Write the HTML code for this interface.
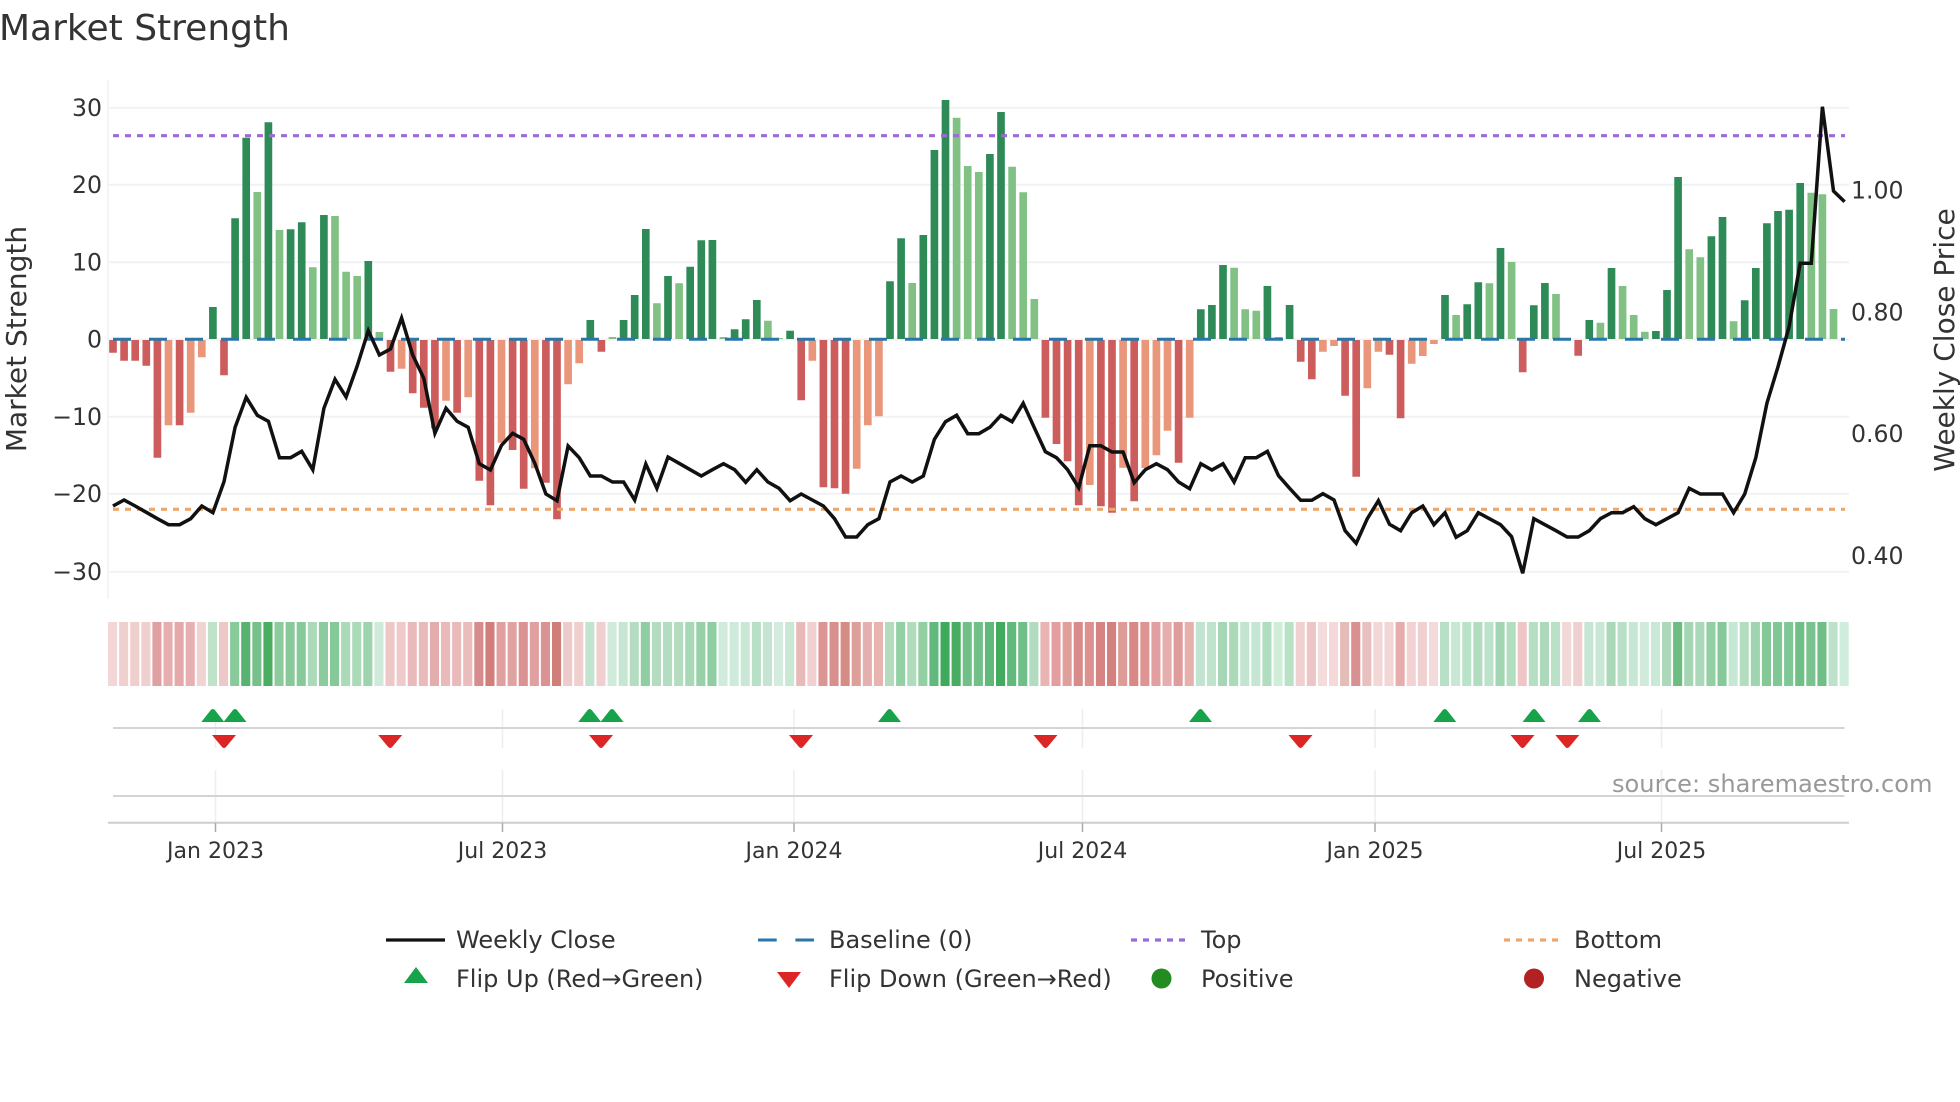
<!DOCTYPE html>
<html lang="en">
<head>
<meta charset="utf-8">
<title>Market Strength</title>
<style>
html,body{margin:0;padding:0;background:#fff}
svg{display:block}
text{font-family:"DejaVu Sans","Liberation Sans",sans-serif;fill:#333}
.t{font-size:23.6px;text-anchor:end}
.r{font-size:23.6px}
.d{font-size:22px;text-anchor:middle}
.l{font-size:24px}
.h rect{width:.82px;height:64px}
</style>
</head>
<body>
<svg width="1960" height="1102" viewBox="0 0 1960 1102" xmlns="http://www.w3.org/2000/svg">
<defs>
<path id="u" d="M-11.5 722H11.5L2 710Q0 708-2 710Z" fill="#16a34a"/>
<path id="n" d="M-12 735H12L2 747Q0 749-2 747Z" fill="#dc2626"/>
</defs>
<rect width="1960" height="1102" fill="#fff"/>
<text x="-1" y="40" style="font-size:36px">Market Strength</text>

<!-- grid -->
<path d="M108 80V599" stroke="#f1f2f5" stroke-width="1.5" fill="none"/>
<path d="M108 107.7H1849M108 184.7H1849M108 262.3H1849M108 339.5H1849M108 416.7H1849M108 493.7H1849M108 571.7H1849" stroke="#f0f2f5" stroke-width="2" fill="none"/>

<!-- bars -->
<g transform="translate(113 0) scale(11.1 1)" fill="none" stroke-width=".69">
<path stroke="#cd5c5c" d="M0 340V352.7M1 340V360.7M2 340V360.7M3 340V365.7M4 340V457.7M6 340V425.3M10 340V375.3M25 340V371.7M27 340V393.3M28 340V407.7M29 340V428.3M31 340V412.7M33 340V480.7M34 340V505.3M36 340V450M37 340V488.7M39 340V482.7M40 340V519.3M44 340V351.7M62 340V400.3M64 340V487.3M65 340V488.3M66 340V493.7M84 340V417.7M85 340V444M86 340V461.3M87 340V505.3M89 340V506.3M90 340V512.7M92 340V501.3M96 340V462.7M107 340V361.7M108 340V379.3M111 340V395.7M112 340V476.7M115 340V354.7M116 340V418.3M127 340V372.3M132 340V355.7"/>
<path stroke="#e9967a" d="M5 340V425.3M7 340V412.7M8 340V357.3M26 340V368.7M30 340V400.7M32 340V397.3M35 340V442.7M38 340V468.3M41 340V384.3M42 340V363.3M63 340V360.7M67 340V468.7M68 340V425.3M69 340V416.3M88 340V485M91 340V467.7M93 340V468M94 340V455.3M95 340V430.7M97 340V417.7M109 340V351.7M110 340V346M113 340V388.3M114 340V351.7M117 340V363.7M118 340V356M119 340V344"/>
<path stroke="#2e8b57" d="M9 339V307M11 339V218.3M12 339V137.7M14 339V122.3M16 339V229.3M17 339V222.3M19 339V215M23 339V261M43 339V320M46 339V320M47 339V295M48 339V229M50 339V276M52 339V266.7M53 339V240.3M54 339V240M56 339V329.3M57 339V319.3M58 339V300M61 339V330.7M70 339V281.3M71 339V238.3M73 339V235M74 339V150M75 339V100M79 339V154M80 339V112M98 339V309.3M99 339V305M100 339V265M104 339V286M106 339V305M120 339V295M122 339V304.3M123 339V282.3M125 339V248M128 339V305.3M129 339V283M133 339V320M135 339V268M139 339V331M140 339V290M141 339V177M144 339V236.3M145 339V217M147 339V300.3M148 339V268M149 339V223.3M150 339V211M151 339V209.7M152 339V183"/>
<path stroke="#81c184" d="M13 339V192M15 339V230M18 339V267.3M20 339V216M21 339V271.7M22 339V276M24 339V332M45 339V337M49 339V303.3M51 339V283.3M55 339V337M59 339V320.7M60 339V338M72 339V283M76 339V117.7M77 339V166M78 339V172M81 339V166.7M82 339V192.3M83 339V299M101 339V267.7M102 339V309.3M103 339V310.7M105 339V337M121 339V315M124 339V283.3M126 339V262M130 339V294M134 339V322.7M136 339V286M137 339V315M138 339V331.7M142 339V249.3M143 339V257.3M146 339V321.3M153 339V192.7M154 339V194.3M155 339V309"/>
</g>

<!-- baseline, top, bottom -->
<path d="M113 339.2H1845" stroke="#2a76a8" stroke-width="3" stroke-dasharray="18 18" fill="none"/>
<path d="M113 135.7H1845" stroke="#9b6bd6" stroke-width="3.2" stroke-dasharray="6 6" fill="none"/>
<path d="M113 509.3H1845" stroke="#eaa86f" stroke-width="3.2" stroke-dasharray="6 6" fill="none"/>

<!-- weekly close -->
<g transform="translate(113 0) scale(11.1 1)">
<polyline fill="none" stroke="#111" stroke-width="3.5" vector-effect="non-scaling-stroke" points="0,506 1,500 2,506 3,512.3 4,518.7 5,524.7 6,524.7 7,518.7 8,506 9,512.7 10,481.7 11,427.3 12,397.3 13,415.3 14,421.3 15,457.7 16,457.7 17,451.3 18,469.7 19,408.3 20,379.3 21,397 22,366 23,330.7 24,355 25,349 26,318 27,355 28,378.3 29,433.3 30,408.3 31,421.3 32,427.3 33,463.7 34,470 35,445.3 36,433.3 37,439.3 38,463.3 39,494 40,500.7 41,446 42,457.7 43,476 44,476 45,482 46,482 47,500 48,464 49,488.3 50,457 51,463.3 52,469.7 53,476 54,469.7 55,463.7 56,469.7 57,482.3 58,469.7 59,482 60,488.3 61,500.7 62,494 63,500 64,506 65,518.7 66,537 67,537 68,524.7 69,518.7 70,482 71,476 72,482 73,476 74,439.3 75,421.7 76,415.3 77,433.7 78,433.7 79,427.3 80,415.3 81,421.7 82,403.3 83,427.7 84,451.7 85,457.7 86,469.7 87,487.7 88,445.7 89,445.7 90,452 91,452 92,482.7 93,469.7 94,463.7 95,469.7 96,482 97,488.7 98,463.7 99,470 100,463.7 101,482 102,457.7 103,457.7 104,451.3 105,475.7 106,488.3 107,500.3 108,500.3 109,493.7 110,500 111,530.7 112,543.3 113,518.7 114,500.7 115,524.3 116,530.7 117,512.7 118,506 119,524.7 120,512.7 121,537.3 122,530.7 123,512.7 124,518.7 125,524.7 126,536.7 127,573.3 128,518.7 129,524.7 130,530.7 131,537 132,537 133,530.7 134,518.7 135,512.7 136,512.7 137,506.7 138,518.7 139,524.7 140,518.7 141,512.7 142,488.3 143,494 144,494 145,494 146,512.7 147,494 148,457.7 149,403.3 150,366.7 151,326.7 152,263.3 153,263.3 154,106.7 155,191 156,201.7"/>
</g>

<!-- axis labels -->
<text class="t" x="102" y="116">30</text>
<text class="t" x="102" y="193">20</text>
<text class="t" x="102" y="270.5">10</text>
<text class="t" x="102" y="347.5">0</text>
<text class="t" x="102" y="425">−10</text>
<text class="t" x="102" y="502">−20</text>
<text class="t" x="102" y="580">−30</text>
<text class="r" x="1851" y="198.5">1.00</text>
<text class="r" x="1851" y="320.5">0.80</text>
<text class="r" x="1851" y="442">0.60</text>
<text class="r" x="1851" y="564">0.40</text>
<text transform="translate(26 339) rotate(-90)" text-anchor="middle" style="font-size:28px">Market Strength</text>
<text transform="translate(1954 340) rotate(-90)" text-anchor="middle" style="font-size:28px">Weekly Close Price</text>

<!-- heat strip -->
<g class="h" transform="translate(108 622) scale(11.1 1)">
<rect x="0" fill="#f3d6d6"/><rect x="1" fill="#f0cfcf"/><rect x="2" fill="#efcfcd"/><rect x="3" fill="#f0cfcf"/><rect x="4" fill="#dfa0a0"/><rect x="5" fill="#e6aeae"/><rect x="6" fill="#e4aaaa"/><rect x="7" fill="#e7b0b0"/><rect x="8" fill="#efd4d2"/><rect x="9" fill="#bfe2c9"/>
<rect x="10" fill="#eec8c8"/><rect x="11" fill="#88ca9a"/><rect x="12" fill="#58b370"/><rect x="13" fill="#77c08c"/><rect x="14" fill="#4aad62"/><rect x="15" fill="#8ccb9d"/><rect x="16" fill="#88c99a"/><rect x="17" fill="#88c99a"/><rect x="18" fill="#abdab8"/><rect x="19" fill="#8ccb9d"/>
<rect x="20" fill="#85c998"/><rect x="21" fill="#abdab8"/><rect x="22" fill="#abdab8"/><rect x="23" fill="#9dd4ad"/><rect x="24" fill="#cfeadb"/><rect x="25" fill="#eec8c8"/><rect x="26" fill="#efcaca"/><rect x="27" fill="#eababa"/><rect x="28" fill="#eababa"/><rect x="29" fill="#e4adad"/>
<rect x="30" fill="#eababa"/><rect x="31" fill="#eababa"/><rect x="32" fill="#ebbcbc"/><rect x="33" fill="#d68c8c"/><rect x="34" fill="#d27f7c"/><rect x="35" fill="#e0a0a0"/><rect x="36" fill="#e0a3a3"/><rect x="37" fill="#da9292"/><rect x="38" fill="#e0a0a0"/><rect x="39" fill="#da9292"/>
<rect x="40" fill="#cf7f78"/><rect x="41" fill="#efcaca"/><rect x="42" fill="#f0cfcf"/><rect x="43" fill="#c2e4cf"/><rect x="44" fill="#efcfcf"/><rect x="45" fill="#d0ebdb"/><rect x="46" fill="#c6e6d3"/><rect x="47" fill="#b3dcc0"/><rect x="48" fill="#8fcea0"/><rect x="49" fill="#b3dcc0"/>
<rect x="50" fill="#b3dcc0"/><rect x="51" fill="#b3dcc0"/><rect x="52" fill="#a8d8b5"/><rect x="53" fill="#97d1a7"/><rect x="54" fill="#8fcea0"/><rect x="55" fill="#d0ebdb"/><rect x="56" fill="#cdeada"/><rect x="57" fill="#c8e7d5"/><rect x="58" fill="#b8e0c6"/><rect x="59" fill="#c5e5d2"/>
<rect x="60" fill="#d3ecdf"/><rect x="61" fill="#c8e8d5"/><rect x="62" fill="#e9b8b8"/><rect x="63" fill="#f0d0d0"/><rect x="64" fill="#dc9595"/><rect x="65" fill="#d98f8c"/><rect x="66" fill="#d48c84"/><rect x="67" fill="#dd9f9a"/><rect x="68" fill="#e6afaf"/><rect x="69" fill="#e8b4b0"/>
<rect x="70" fill="#b3dcbf"/><rect x="71" fill="#93d0a5"/><rect x="72" fill="#b0dbbc"/><rect x="73" fill="#92cfa3"/><rect x="74" fill="#62b97d"/><rect x="75" fill="#3faa5c"/><rect x="76" fill="#48ad62"/><rect x="77" fill="#6fbf86"/><rect x="78" fill="#71c088"/><rect x="79" fill="#60b87a"/>
<rect x="80" fill="#43ab5f"/><rect x="81" fill="#62b97d"/><rect x="82" fill="#71bf88"/><rect x="83" fill="#b2dcbf"/><rect x="84" fill="#e8b4b4"/><rect x="85" fill="#e39f9f"/><rect x="86" fill="#dfa09c"/><rect x="87" fill="#d98a8a"/><rect x="88" fill="#dc9190"/><rect x="89" fill="#d68382"/>
<rect x="90" fill="#d4807e"/><rect x="91" fill="#dd9c98"/><rect x="92" fill="#d98885"/><rect x="93" fill="#dd9493"/><rect x="94" fill="#e19f9f"/><rect x="95" fill="#e5adad"/><rect x="96" fill="#e09b9b"/><rect x="97" fill="#e6b0ad"/><rect x="98" fill="#c0e4cf"/><rect x="99" fill="#bfe3cd"/>
<rect x="100" fill="#a5d6b5"/><rect x="101" fill="#aadab8"/><rect x="102" fill="#c2e4d0"/><rect x="103" fill="#c5e6d3"/><rect x="104" fill="#b0dcbf"/><rect x="105" fill="#d0edd8"/><rect x="106" fill="#b8e1c6"/><rect x="107" fill="#f0d0d0"/><rect x="108" fill="#ecc6c6"/><rect x="109" fill="#f5dcdc"/>
<rect x="110" fill="#f5d8da"/><rect x="111" fill="#e4bcb8"/><rect x="112" fill="#d99090"/><rect x="113" fill="#e9c0c0"/><rect x="114" fill="#f3d6d6"/><rect x="115" fill="#f2d5d5"/><rect x="116" fill="#e7adad"/><rect x="117" fill="#f2d2d2"/><rect x="118" fill="#f0d0d0"/><rect x="119" fill="#f3dadb"/>
<rect x="120" fill="#b8e0c6"/><rect x="121" fill="#c8e8d5"/><rect x="122" fill="#bae2c8"/><rect x="123" fill="#b2dcbf"/><rect x="124" fill="#bde2cb"/><rect x="125" fill="#a2d6b2"/><rect x="126" fill="#b2ddbf"/><rect x="127" fill="#eec6c6"/><rect x="128" fill="#b5dfc3"/><rect x="129" fill="#acd9ba"/>
<rect x="130" fill="#bae1c8"/><rect x="131" fill="#f3d8d8"/><rect x="132" fill="#efcfcf"/><rect x="133" fill="#c6e6d3"/><rect x="134" fill="#c8e8d5"/><rect x="135" fill="#a9d9b8"/><rect x="136" fill="#b8e0c7"/><rect x="137" fill="#c6e7d3"/><rect x="138" fill="#d0ebdc"/><rect x="139" fill="#c9e8d6"/>
<rect x="140" fill="#add9ba"/><rect x="141" fill="#6dbd82"/><rect x="142" fill="#a5d6b4"/><rect x="143" fill="#aad8b8"/><rect x="144" fill="#92cfa3"/><rect x="145" fill="#85c99a"/><rect x="146" fill="#c6e7d3"/><rect x="147" fill="#b2ddbf"/><rect x="148" fill="#9ed4ae"/><rect x="149" fill="#83c997"/>
<rect x="150" fill="#7fc795"/><rect x="151" fill="#80c796"/><rect x="152" fill="#6fbf86"/><rect x="153" fill="#7ac391"/><rect x="154" fill="#6fbe85"/><rect x="155" fill="#bde2cb"/><rect x="156" fill="#d0ecdc"/>
</g>

<!-- lower panels -->
<path d="M215.5 709V748M502.5 709V748M794 709V748M1082.5 709V748M1375 709V748M1661.5 709V748M215.5 770V823M502.5 770V823M794 770V823M1082.5 770V823M1375 770V823M1661.5 770V823" stroke="#eceef2" stroke-width="1.5" fill="none"/>
<path d="M113 728H1844.5M113 796H1844.5" stroke="#d2d4d8" stroke-width="2" fill="none"/>
<path d="M108 822.8H1849" stroke="#cdcdcd" stroke-width="2" fill="none"/>
<path d="M215.5 823V832M502.5 823V832M794 823V832M1082.5 823V832M1375 823V832M1661.5 823V832" stroke="#aaa" stroke-width="1.5" fill="none"/>

<use href="#u" x="212.8"/><use href="#u" x="235"/><use href="#u" x="589.7"/><use href="#u" x="612"/><use href="#u" x="889.5"/><use href="#u" x="1200.5"/><use href="#u" x="1444.8"/><use href="#u" x="1534"/><use href="#u" x="1589.5"/>
<use href="#n" x="224"/><use href="#n" x="390.2"/><use href="#n" x="601"/><use href="#n" x="801"/><use href="#n" x="1045.5"/><use href="#n" x="1300.5"/><use href="#n" x="1522.5"/><use href="#n" x="1567.3"/>

<text class="d" x="215.5" y="858">Jan 2023</text>
<text class="d" x="502.5" y="858">Jul 2023</text>
<text class="d" x="794" y="858">Jan 2024</text>
<text class="d" x="1082.5" y="858">Jul 2024</text>
<text class="d" x="1375" y="858">Jan 2025</text>
<text class="d" x="1661.5" y="858">Jul 2025</text>

<text x="1612" y="792" style="font-size:24.1px;fill:#999">source: sharemaestro.com</text>

<!-- legend -->
<path d="M386 940H445" stroke="#111" stroke-width="3.2" fill="none"/>
<path d="M758 940H814" stroke="#2a76a8" stroke-width="3" stroke-dasharray="18.7 18.7" fill="none"/>
<path d="M1131 940H1186" stroke="#9b6bd6" stroke-width="3.2" stroke-dasharray="6 6" fill="none"/>
<path d="M1504 940H1559" stroke="#eaa86f" stroke-width="3.2" stroke-dasharray="6 6" fill="none"/>
<path d="M404 983H428L416 967Z" fill="#16a34a"/>
<path d="M777 972H801L789 988Z" fill="#dc2626"/>
<circle cx="1161.5" cy="978.5" r="10" fill="#228b22"/>
<circle cx="1534" cy="978.5" r="10" fill="#b22222"/>
<text class="l" x="456" y="948">Weekly Close</text>
<text class="l" x="829" y="948">Baseline (0)</text>
<text class="l" x="1201" y="948">Top</text>
<text class="l" x="1574" y="948">Bottom</text>
<text class="l" x="456" y="987">Flip Up (Red→Green)</text>
<text class="l" x="829" y="987">Flip Down (Green→Red)</text>
<text class="l" x="1201" y="987">Positive</text>
<text class="l" x="1574" y="987">Negative</text>
</svg>
</body>
</html>
